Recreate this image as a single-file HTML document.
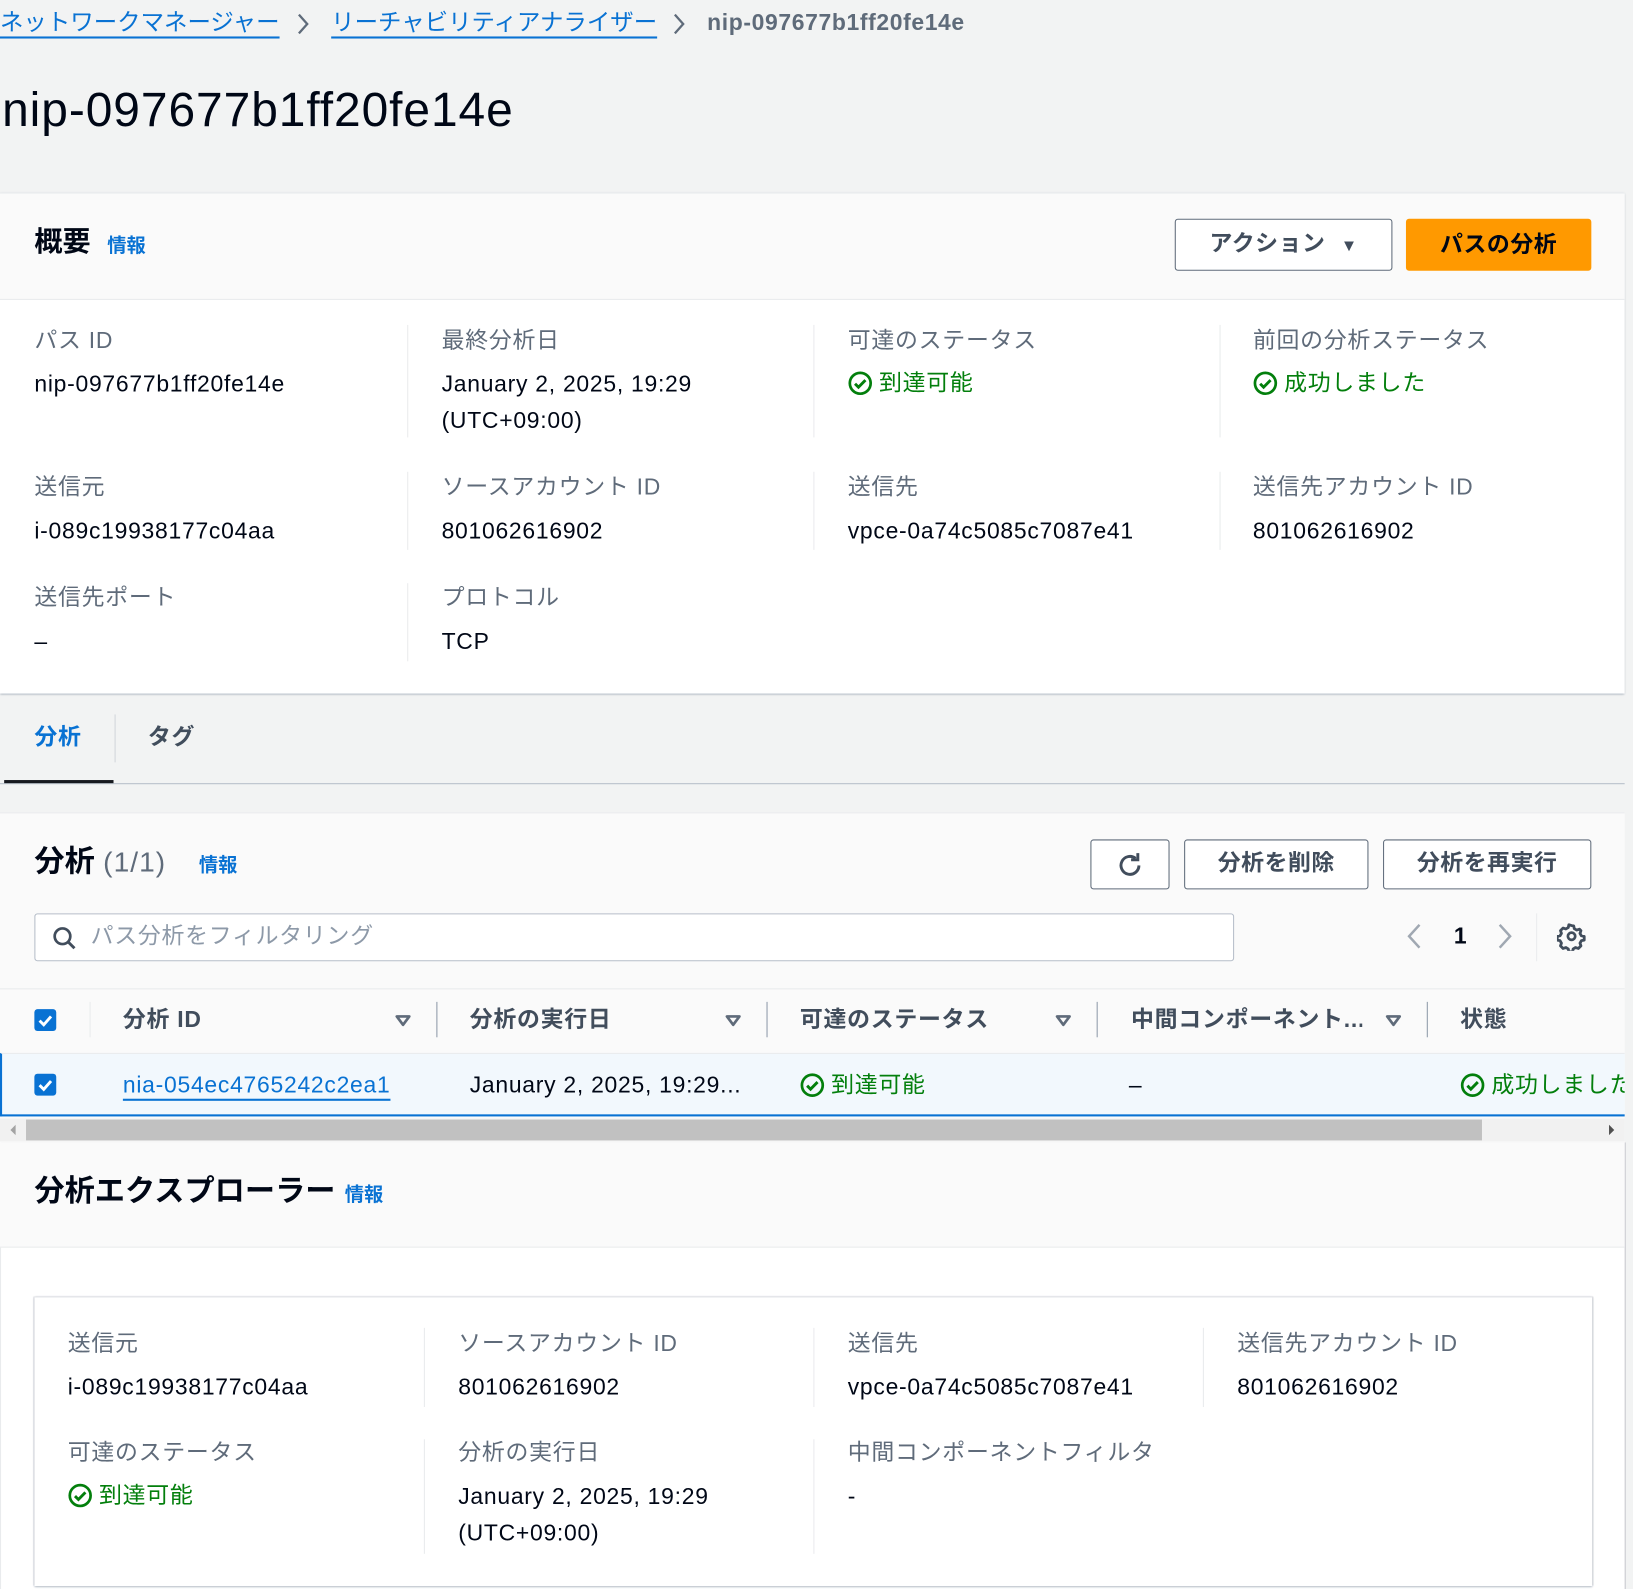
<!DOCTYPE html>
<html><head><meta charset="utf-8"><style>
html,body{margin:0;padding:0;width:1633px;height:1589px;overflow:hidden;background:#f2f3f3}
#w{position:absolute;left:0;top:0;width:1568px;height:1526px;transform:scale(1.04145);transform-origin:0 0;font-family:"Liberation Sans","Noto Sans CJK JP",sans-serif;color:#000716}
.t{position:absolute;white-space:nowrap;height:30px;line-height:30px;font-size:22px;letter-spacing:.7px}
.lb{color:#5f6b7a}
.b{font-weight:bold}
.bl{color:#0972d3}
.g{color:#037f0c}
.box{position:absolute}
.vs{position:absolute;width:1px;background:#e9ebed}
.btn{position:absolute;border:1.5px solid #5f6b7a;border-radius:3px;background:#fff;box-sizing:border-box;font-weight:bold;font-size:22px;letter-spacing:.5px;color:#414d5c;text-align:center}
.ok{display:inline-block;vertical-align:middle;margin-right:6px;margin-top:-3px}
.cb{position:absolute;width:21px;height:21px;background:#0972d3;border-radius:3px}
</style></head><body><div id="w">
<svg width="0" height="0" style="position:absolute"><defs>
<symbol id="ok" viewBox="0 0 24 24"><circle cx="12" cy="12" r="10" fill="none" stroke="#037f0c" stroke-width="2.6"/><path d="M7 12.5l3.3 3.3L17 9" fill="none" stroke="#037f0c" stroke-width="2.8"/></symbol>
<symbol id="ck" viewBox="0 0 21 21"><path d="M5 11l4 4 7-8" fill="none" stroke="#fff" stroke-width="2.8"/></symbol>
<symbol id="tri" viewBox="0 0 16 12"><path d="M2 2h12L8 10z" fill="none" stroke="#5f6b7a" stroke-width="2.6" stroke-linejoin="round"/></symbol>
</defs></svg>

<!-- breadcrumb -->
<div class="t bl" style="left:0;top:7px;text-decoration:underline;text-underline-offset:6px;font-size:22.5px;letter-spacing:0">ネットワークマネージャー</div>
<svg class="box" style="left:284px;top:12px" width="14" height="22"><path d="M3 2l8 9-8 9" fill="none" stroke="#5f6b7a" stroke-width="2.2"/></svg>
<div class="t bl" style="left:318px;top:7px;text-decoration:underline;text-underline-offset:6px;font-size:22.5px;letter-spacing:0">リーチャビリティアナライザー</div>
<svg class="box" style="left:645px;top:12px" width="14" height="22"><path d="M3 2l8 9-8 9" fill="none" stroke="#5f6b7a" stroke-width="2.2"/></svg>
<div class="t b" style="left:679px;top:7px;color:#5f6b7a;font-size:22px;letter-spacing:.6px">nip-097677b1ff20fe14e</div>

<div class="t" style="left:2px;top:80px;height:50px;line-height:50px;font-size:46px;letter-spacing:.9px">nip-097677b1ff20fe14e</div>

<!-- panel 1 -->
<div class="box" style="left:0;top:185px;width:1560px;height:480px;background:#fff;box-shadow:0 1px 2px #8d99a8;border-top:1px solid #e9ebed"></div>
<div class="box" style="left:0;top:186px;width:1560px;height:101px;background:#fafafa;border-bottom:1px solid #e9ebed"></div>
<div class="t b" style="left:33px;top:215px;font-size:27px;height:34px;line-height:34px;letter-spacing:0">概要</div>
<div class="t b bl" style="left:103px;top:221px;font-size:18.5px;letter-spacing:0">情報</div>
<div class="btn" style="left:1128px;top:210px;width:209px;height:50px;line-height:46px">アクション <span style="font-size:16px;margin-left:8px">▼</span></div>
<div class="btn" style="left:1350px;top:210px;width:178px;height:50px;line-height:48px;background:#ff9900;border-color:#ff9900;color:#000716">パスの分析</div>

<div class="vs" style="left:391px;top:312px;height:108px"></div>
<div class="vs" style="left:781px;top:312px;height:108px"></div>
<div class="vs" style="left:1171px;top:312px;height:108px"></div>
<div class="vs" style="left:391px;top:453px;height:75px"></div>
<div class="vs" style="left:781px;top:453px;height:75px"></div>
<div class="vs" style="left:1171px;top:453px;height:75px"></div>
<div class="vs" style="left:391px;top:560px;height:75px"></div>

<div class="t lb" style="left:33px;top:312px">パス ID</div>
<div class="t" style="left:33px;top:354px">nip-097677b1ff20fe14e</div>
<div class="t lb" style="left:424px;top:312px">最終分析日</div>
<div class="t" style="left:424px;top:354px">January 2, 2025, 19:29</div>
<div class="t" style="left:424px;top:389px">(UTC+09:00)</div>
<div class="t lb" style="left:814px;top:312px">可達のステータス</div>
<div class="t g" style="left:814px;top:353px"><svg class="ok" width="24" height="24"><use href="#ok"/></svg>到達可能</div>
<div class="t lb" style="left:1203px;top:312px">前回の分析ステータス</div>
<div class="t g" style="left:1203px;top:353px"><svg class="ok" width="24" height="24"><use href="#ok"/></svg>成功しました</div>

<div class="t lb" style="left:33px;top:453px">送信元</div>
<div class="t" style="left:33px;top:495px">i-089c19938177c04aa</div>
<div class="t lb" style="left:424px;top:453px">ソースアカウント ID</div>
<div class="t" style="left:424px;top:495px">801062616902</div>
<div class="t lb" style="left:814px;top:453px">送信先</div>
<div class="t" style="left:814px;top:495px">vpce-0a74c5085c7087e41</div>
<div class="t lb" style="left:1203px;top:453px">送信先アカウント ID</div>
<div class="t" style="left:1203px;top:495px">801062616902</div>

<div class="t lb" style="left:33px;top:559px">送信先ポート</div>
<div class="t" style="left:33px;top:601px">–</div>
<div class="t lb" style="left:424px;top:559px">プロトコル</div>
<div class="t" style="left:424px;top:601px">TCP</div>

<!-- tabs -->
<div class="t b bl" style="left:33px;top:693px">分析</div>
<div class="vs" style="left:110px;top:686px;height:46px;background:#d1d5db"></div>
<div class="t b" style="left:142px;top:693px;color:#414d5c">タグ</div>
<div class="box" style="left:0;top:752px;width:1560px;height:1px;background:#b6bec9"></div>
<div class="box" style="left:4px;top:749px;width:105px;height:3px;background:#16191f"></div>

<!-- panel 2 -->
<div class="box" style="left:0;top:780px;width:1560px;height:317px;background:#fafafa;border-top:1px solid #e9ebed"></div>
<div class="t b" style="left:33px;top:810px;font-size:29px;height:36px;line-height:36px;letter-spacing:0">分析 <span style="font-weight:normal;color:#5f6b7a;font-size:27px;letter-spacing:1px">(1/1)</span></div>
<div class="t b bl" style="left:191px;top:816px;font-size:18.5px;letter-spacing:0">情報</div>
<div class="btn" style="left:1047px;top:806px;width:76px;height:48px"><svg style="position:absolute;left:23px;top:10px" width="28" height="28" viewBox="0 0 26 26"><path d="M21 13a8 8 0 1 1-3-6.3" fill="none" stroke="#414d5c" stroke-width="2.6"/><path d="M20 2v6h-6" fill="none" stroke="#414d5c" stroke-width="2.6"/></svg></div>
<div class="btn" style="left:1137px;top:806px;width:177px;height:48px;line-height:44px">分析を削除</div>
<div class="btn" style="left:1328px;top:806px;width:200px;height:48px;line-height:44px">分析を再実行</div>

<div class="box" style="left:33px;top:877px;width:1152px;height:46px;background:#fff;border:1px solid #b6bec9;border-radius:3px;box-sizing:border-box"></div>
<svg class="box" style="left:49px;top:888px" width="26" height="26" viewBox="0 0 26 26"><circle cx="11" cy="11" r="7.5" fill="none" stroke="#414d5c" stroke-width="2.6"/><path d="M16.5 16.5l6 6" stroke="#414d5c" stroke-width="2.8"/></svg>
<div class="t" style="left:87px;top:884px;color:#8d99a8">パス分析をフィルタリング</div>
<svg class="box" style="left:1350px;top:886px" width="16" height="26"><path d="M13 2L3 13l10 11" fill="none" stroke="#a0a8b2" stroke-width="2.4"/></svg>
<div class="t b" style="left:1396px;top:884px">1</div>
<svg class="box" style="left:1437px;top:886px" width="16" height="26"><path d="M3 2l10 11L3 24" fill="none" stroke="#a0a8b2" stroke-width="2.4"/></svg>
<div class="vs" style="left:1475px;top:877px;height:46px"></div>
<svg class="box" style="left:1495px;top:885px" width="28" height="28" viewBox="0 0 28 28"><path d="M14 2.5l2.2.3.6 3 2.6 1.5 2.9-1 1.6 1.6-1 2.9 1.5 2.6 3 .6v4l-3 .6-1.5 2.6 1 2.9-2.800 2.8-2.9-1-2.6 1.5-.6 3h-4l-.6-3-2.6-1.5-2.9 1-2.8-2.8 1-2.9-1.5-2.6-3-.6v-4l3-.6 1.5-2.6-1-2.9 2.8-2.8 2.9 1 2.6-1.5.6-3z" transform="translate(1.5 1.5) scale(.9)" fill="none" stroke="#414d5c" stroke-width="3" stroke-linejoin="round"/><circle cx="14" cy="14" r="3.5" fill="none" stroke="#414d5c" stroke-width="2.6"/></svg>

<div class="box" style="left:0;top:949px;width:1560px;height:1px;background:#e9ebed"></div>
<div class="cb" style="left:33px;top:969px"><svg width="21" height="21"><use href="#ck"/></svg></div>
<div class="vs" style="left:86px;top:962px;height:34px"></div>
<div class="t b" style="left:118px;top:964px;color:#414d5c">分析 ID</div>
<svg class="box" style="left:379px;top:974px" width="16" height="12"><use href="#tri"/></svg>
<div class="vs" style="left:419px;top:962px;height:34px;background:#8d99a8"></div>
<div class="t b" style="left:451px;top:964px;color:#414d5c">分析の実行日</div>
<svg class="box" style="left:696px;top:974px" width="16" height="12"><use href="#tri"/></svg>
<div class="vs" style="left:736px;top:962px;height:34px;background:#8d99a8"></div>
<div class="t b" style="left:768px;top:964px;color:#414d5c">可達のステータス</div>
<svg class="box" style="left:1013px;top:974px" width="16" height="12"><use href="#tri"/></svg>
<div class="vs" style="left:1053px;top:962px;height:34px;background:#8d99a8"></div>
<div class="t b" style="left:1086px;top:964px;color:#414d5c;width:222px;overflow:hidden">中間コンポーネント...</div>
<svg class="box" style="left:1330px;top:974px" width="16" height="12"><use href="#tri"/></svg>
<div class="vs" style="left:1370px;top:962px;height:34px;background:#8d99a8"></div>
<div class="t b" style="left:1402px;top:964px;color:#414d5c">状態</div>

<div class="box" style="left:0;top:1011px;width:1560px;height:61px;background:#f2f8fd;border-top:1px solid #e9ebed;border-bottom:2px solid #0972d3;border-left:2px solid #0972d3;box-sizing:border-box"></div>
<div class="cb" style="left:33px;top:1031px"><svg width="21" height="21"><use href="#ck"/></svg></div>
<div class="t bl" style="left:118px;top:1027px;text-decoration:underline;text-underline-offset:6px">nia-054ec4765242c2ea1</div>
<div class="t" style="left:451px;top:1027px">January 2, 2025, 19:29...</div>
<div class="t g" style="left:768px;top:1027px"><svg class="ok" width="24" height="24"><use href="#ok"/></svg>到達可能</div>
<div class="t" style="left:1084px;top:1027px">–</div>
<div class="t g" style="left:1402px;top:1027px;width:158px;overflow:hidden"><svg class="ok" width="24" height="24"><use href="#ok"/></svg>成功しました</div>

<div class="box" style="left:0;top:1074px;width:1560px;height:22px;background:#f1f1f1"></div>
<div class="box" style="left:25px;top:1075px;width:1398px;height:20px;background:#c1c1c1"></div>
<svg class="box" style="left:8px;top:1079px" width="8" height="12"><path d="M7 1L2 6l5 5z" fill="#a3a3a3"/></svg>
<svg class="box" style="left:1544px;top:1079px" width="8" height="12"><path d="M1 1l5 5-5 5z" fill="#505050"/></svg>

<!-- panel 3 -->
<div class="box" style="left:0;top:1097px;width:1560px;height:429px;background:#fff;border-left:1px solid #e9ebed;box-sizing:border-box;box-shadow:1px 0 0 #c6c6cd"></div>
<div class="box" style="left:0;top:1097px;width:1560px;height:100px;background:#fafafa;border-bottom:1px solid #e9ebed"></div>
<div class="t b" style="left:33px;top:1126px;font-size:29px;height:36px;line-height:36px;letter-spacing:0">分析エクスプローラー</div>
<div class="t b bl" style="left:331px;top:1132px;font-size:18.5px;letter-spacing:0">情報</div>

<div class="box" style="left:33px;top:1245px;width:1496px;height:277px;background:#fff;border-top:1px solid #e9ebed;box-shadow:0 1px 2px #8d99a8,1px 0 1px #c6c6cd,-1px 0 1px #d6d6dd"></div>
<div class="vs" style="left:407px;top:1275px;height:76px"></div>
<div class="vs" style="left:781px;top:1275px;height:76px"></div>
<div class="vs" style="left:1155px;top:1275px;height:76px"></div>
<div class="vs" style="left:407px;top:1382px;height:110px"></div>
<div class="vs" style="left:781px;top:1382px;height:110px"></div>

<div class="t lb" style="left:65px;top:1275px">送信元</div>
<div class="t" style="left:65px;top:1317px">i-089c19938177c04aa</div>
<div class="t lb" style="left:440px;top:1275px">ソースアカウント ID</div>
<div class="t" style="left:440px;top:1317px">801062616902</div>
<div class="t lb" style="left:814px;top:1275px">送信先</div>
<div class="t" style="left:814px;top:1317px">vpce-0a74c5085c7087e41</div>
<div class="t lb" style="left:1188px;top:1275px">送信先アカウント ID</div>
<div class="t" style="left:1188px;top:1317px">801062616902</div>

<div class="t lb" style="left:65px;top:1380px">可達のステータス</div>
<div class="t g" style="left:65px;top:1421px"><svg class="ok" width="24" height="24"><use href="#ok"/></svg>到達可能</div>
<div class="t lb" style="left:440px;top:1380px">分析の実行日</div>
<div class="t" style="left:440px;top:1422px">January 2, 2025, 19:29</div>
<div class="t" style="left:440px;top:1457px">(UTC+09:00)</div>
<div class="t lb" style="left:814px;top:1380px">中間コンポーネントフィルタ</div>
<div class="t" style="left:814px;top:1422px">-</div>
</div></body></html>
